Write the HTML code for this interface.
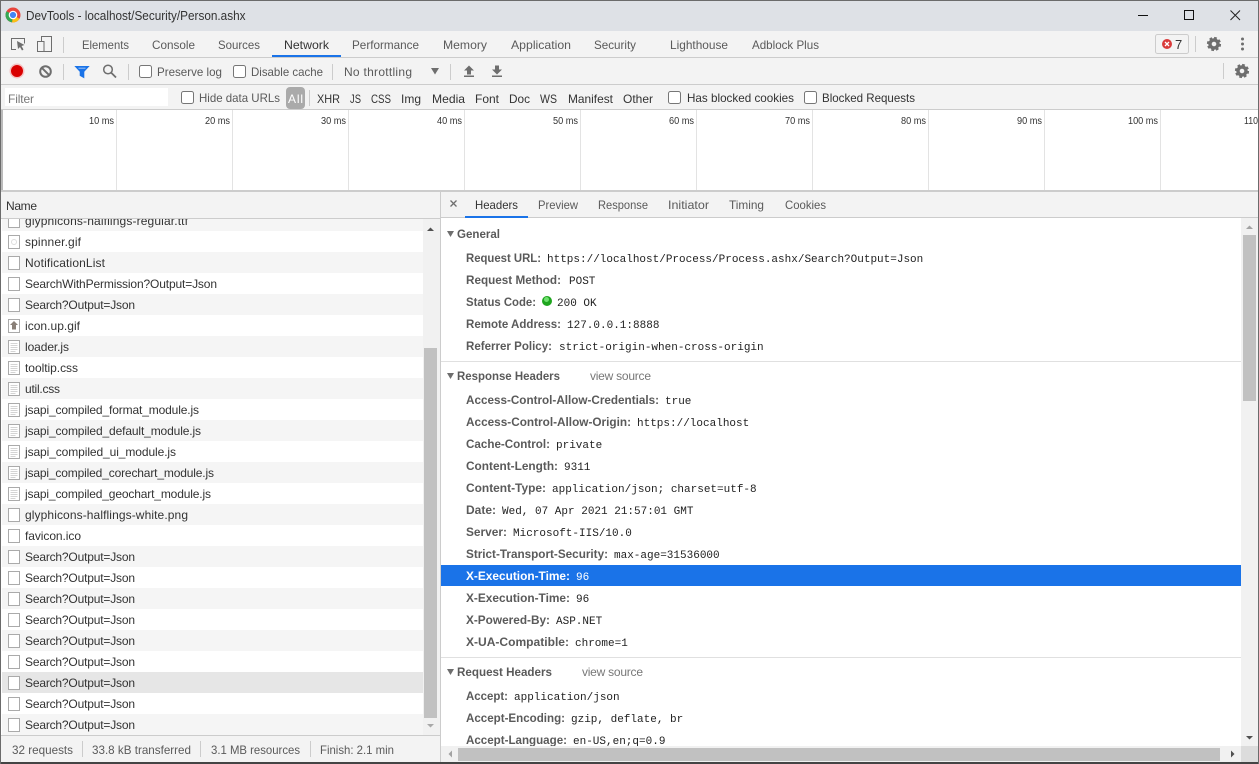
<!DOCTYPE html>
<html><head><meta charset="utf-8"><title>DevTools - localhost/Security/Person.ashx</title>
<style>
html,body{margin:0;padding:0;background:#333;width:1259px;height:764px;overflow:hidden}
svg{display:block}
text{font-family:"Liberation Sans",sans-serif;font-size:12px;fill:#5a5a5a;white-space:pre}
.d{fill:#333}
.b{font-weight:bold;fill:#5a5a5a}
.m{font-family:"Liberation Mono",monospace;font-size:11px;fill:#222}
.t{font-size:10px;fill:#333}
.w{fill:#fff}
</style></head><body>
<svg width="1259" height="764" viewBox="0 0 1259 764" xmlns="http://www.w3.org/2000/svg">
<defs>
<g id="f"><rect x="8.5" y="-6.500" width="11" height="13" fill="#fff" stroke="#aaa"/></g>
<g id="s"><rect x="8.5" y="-6.500" width="11" height="13" fill="#fff" stroke="#aaa"/><path d="M10.500-3.500h7M10.500-1.500h7M10.500 .5h7M10.500 2.500h7M10.500 4.500h5" stroke="#d4d4d4" fill="none"/></g>
<g id="gear"><circle r="4" fill="none" stroke="#6e6e6e" stroke-width="3.400"/><circle r="6" fill="none" stroke="#6e6e6e" stroke-width="2.200" stroke-dasharray="2.700 2"/></g>
<g id="cb"><rect x=".5" y=".5" width="12" height="12" rx="2" fill="#fff" stroke="#767676"/></g>
</defs>

<rect width="1259" height="764" fill="#444"/>
<rect x="1" y="1" width="1257" height="761" fill="#fff"/>
<rect width="1259" height="1" fill="#6b6b6b"/>
<rect x="0" width="1" height="764" fill="#6b6b6b"/>
<rect x="1258" width="1" height="764" fill="#6b6b6b"/>

<!-- title bar -->
<rect x="1" y="1" width="1257" height="30" fill="#dee1e6"/>
<circle cx="13" cy="15" r="7.500" fill="#e8453c"/>
<path d="M13 15L19.500 18.800A7.500 7.500 0 0 1 12 22.400Z" fill="#fbc116"/>
<path d="M13 15L12 22.400A7.500 7.500 0 0 1 6.500 11.200Z" fill="#34a853"/>
<circle cx="13" cy="15" r="3.700" fill="#4285f4" stroke="#fff" stroke-width="1.200"/>
<text x="26" y="20" class="d" textLength="219.500" lengthAdjust="spacingAndGlyphs" style="font-size:12.500px">DevTools - localhost/Security/Person.ashx</text>
<path d="M1138 15.500h10" stroke="#111" fill="none"/>
<rect x="1184.500" y="10.500" width="9" height="9" fill="none" stroke="#111"/>
<path d="M1230.500 10.500l9.500 9.500M1240 10.500l-9.500 9.500" stroke="#222" fill="none"/>

<!-- main tabs -->
<rect x="1" y="31" width="1257" height="26" fill="#f3f3f3"/>
<rect x="1" y="57" width="1257" height="1" fill="#ccc"/>
<path d="M16 49.500h-4.500v-11h13v5" fill="none" stroke="#6e6e6e"/>
<path d="M17 41l7.500 4-3 1 2 3.500-1.500 1-2-3.500-2 2z" fill="#6e6e6e"/>
<path d="M41.500 41v-4.500h10v15h-7" fill="none" stroke="#6e6e6e"/>
<rect x="37.500" y="41.500" width="6.500" height="10" fill="#f3f3f3" stroke="#6e6e6e"/>
<rect x="63" y="37" width="1" height="16" fill="#ccc"/>
<text x="82" y="49" textLength="47" lengthAdjust="spacingAndGlyphs">Elements</text>
<text x="152" y="49" textLength="43" lengthAdjust="spacingAndGlyphs">Console</text>
<text x="218" y="49" textLength="42" lengthAdjust="spacingAndGlyphs">Sources</text>
<text x="284" y="49" class="d" textLength="45" lengthAdjust="spacingAndGlyphs">Network</text>
<text x="352" y="49" textLength="67" lengthAdjust="spacingAndGlyphs">Performance</text>
<text x="443" y="49" textLength="44" lengthAdjust="spacingAndGlyphs">Memory</text>
<text x="511" y="49" textLength="60" lengthAdjust="spacingAndGlyphs">Application</text>
<text x="594" y="49" textLength="42" lengthAdjust="spacingAndGlyphs">Security</text>
<text x="670" y="49" textLength="58" lengthAdjust="spacingAndGlyphs">Lighthouse</text>
<text x="752" y="49" textLength="67" lengthAdjust="spacingAndGlyphs">Adblock Plus</text>
<rect x="272" y="55" width="69" height="2" fill="#1a73e8"/>
<rect x="1155.500" y="34.500" width="33" height="19" rx="2" fill="#f3f3f3" stroke="#ccc"/>
<circle cx="1167" cy="44" r="5" fill="#d93a3a"/>
<path d="M1165 42l4 4M1169 42l-4 4" stroke="#fff" stroke-width="1.300" fill="none"/>
<text x="1175" y="49" class="d" style="font-size:13px">7</text>
<rect x="1195" y="36" width="1" height="16" fill="#ccc"/>
<use href="#gear" x="1214" y="44"/>
<circle cx="1242.500" cy="39" r="1.500" fill="#6e6e6e"/><circle cx="1242.500" cy="44" r="1.500" fill="#6e6e6e"/><circle cx="1242.500" cy="49" r="1.500" fill="#6e6e6e"/>

<!-- toolbar -->
<rect x="1" y="58" width="1257" height="26" fill="#f3f3f3"/>
<rect x="1" y="84" width="1257" height="1" fill="#ccc"/>
<circle cx="17" cy="71" r="7.500" fill="#f4c2c2"/>
<circle cx="17" cy="71" r="6" fill="#d90000"/>
<circle cx="45.500" cy="71.500" r="5.300" fill="none" stroke="#6e6e6e" stroke-width="2"/>
<path d="M41.800 67.800l7.400 7.400" stroke="#6e6e6e" stroke-width="2" fill="none"/>
<rect x="63" y="64" width="1" height="16" fill="#ccc"/>
<path d="M75.500 66.500h13l-4.700 5v6l-3.600-2v-4z" fill="#1a73e8" stroke="#1a73e8"/>
<path d="M78.500 68.200h7" stroke="#9cc3f5" fill="none"/>
<circle cx="108" cy="69.500" r="4.300" fill="none" stroke="#6e6e6e" stroke-width="1.500"/>
<path d="M111 72.500l5 5" stroke="#6e6e6e" stroke-width="1.800" fill="none"/>
<rect x="128" y="64" width="1" height="16" fill="#ccc"/>
<use href="#cb" x="139" y="65"/>
<text x="157" y="76" textLength="65" lengthAdjust="spacingAndGlyphs">Preserve log</text>
<use href="#cb" x="233" y="65"/>
<text x="251" y="76" textLength="72" lengthAdjust="spacingAndGlyphs">Disable cache</text>
<rect x="332" y="64" width="1" height="16" fill="#ccc"/>
<text x="344" y="76" textLength="68">No throttling</text>
<path d="M431 68h8l-4 6.500z" fill="#6e6e6e"/>
<rect x="450" y="64" width="1" height="16" fill="#ccc"/>
<path d="M469 65.500l5 5h-3v4h-4v-4h-3z" fill="#6e6e6e"/><rect x="464" y="75.500" width="10" height="1.500" fill="#6e6e6e"/>
<path d="M495 65.500h4v4h3l-5 5-5-5h3z" fill="#6e6e6e"/><rect x="492" y="75.500" width="10" height="1.500" fill="#6e6e6e"/>
<rect x="1223" y="63" width="1" height="16" fill="#ccc"/>
<use href="#gear" x="1242" y="71"/>

<!-- filter bar -->
<rect x="1" y="85" width="1257" height="24" fill="#f3f3f3"/>
<rect x="1" y="109" width="1257" height="1" fill="#ccc"/>
<rect x="5" y="88" width="163" height="18" fill="#fff"/>
<text x="8" y="103" style="fill:#777" textLength="26">Filter</text>
<use href="#cb" x="181" y="91"/>
<text x="199" y="102" textLength="81" lengthAdjust="spacingAndGlyphs">Hide data URLs</text>
<rect x="286" y="87" width="19" height="22" rx="4" fill="#aaa"/>
<text x="288" y="103" class="w" textLength="15">All</text>
<rect x="309" y="90" width="1" height="16" fill="#ccc"/>
<text x="317" y="103" class="d" textLength="23" lengthAdjust="spacingAndGlyphs">XHR</text>
<text x="350" y="103" class="d" textLength="11" lengthAdjust="spacingAndGlyphs">JS</text>
<text x="371" y="103" class="d" textLength="20" lengthAdjust="spacingAndGlyphs">CSS</text>
<text x="401" y="103" class="d" textLength="20" lengthAdjust="spacingAndGlyphs">Img</text>
<text x="432" y="103" class="d" textLength="33" lengthAdjust="spacingAndGlyphs">Media</text>
<text x="475" y="103" class="d" textLength="24" lengthAdjust="spacingAndGlyphs">Font</text>
<text x="509" y="103" class="d" textLength="21" lengthAdjust="spacingAndGlyphs">Doc</text>
<text x="540" y="103" class="d" textLength="17" lengthAdjust="spacingAndGlyphs">WS</text>
<text x="568" y="103" class="d" textLength="45" lengthAdjust="spacingAndGlyphs">Manifest</text>
<text x="623" y="103" class="d" textLength="30" lengthAdjust="spacingAndGlyphs">Other</text>
<use href="#cb" x="668" y="91"/>
<text x="687" y="102" class="d" textLength="107" lengthAdjust="spacingAndGlyphs">Has blocked cookies</text>
<use href="#cb" x="804" y="91"/>
<text x="822" y="102" class="d" textLength="93" lengthAdjust="spacingAndGlyphs">Blocked Requests</text>

<!-- timeline -->
<rect x="1" y="110" width="1257" height="80" fill="#fff"/>
<rect x="1" y="110" width="2" height="80" fill="#bbb"/>
<path d="M116.500 110v80M232.500 110v80M348.500 110v80M464.500 110v80M580.500 110v80M696.500 110v80M812.500 110v80M928.500 110v80M1044.500 110v80M1160.500 110v80" stroke="#e3e3e3" fill="none"/>
<text x="89" y="124" class="t" textLength="25" lengthAdjust="spacingAndGlyphs">10 ms</text>
<text x="205" y="124" class="t" textLength="25" lengthAdjust="spacingAndGlyphs">20 ms</text>
<text x="321" y="124" class="t" textLength="25" lengthAdjust="spacingAndGlyphs">30 ms</text>
<text x="437" y="124" class="t" textLength="25" lengthAdjust="spacingAndGlyphs">40 ms</text>
<text x="553" y="124" class="t" textLength="25" lengthAdjust="spacingAndGlyphs">50 ms</text>
<text x="669" y="124" class="t" textLength="25" lengthAdjust="spacingAndGlyphs">60 ms</text>
<text x="785" y="124" class="t" textLength="25" lengthAdjust="spacingAndGlyphs">70 ms</text>
<text x="901" y="124" class="t" textLength="25" lengthAdjust="spacingAndGlyphs">80 ms</text>
<text x="1017" y="124" class="t" textLength="25" lengthAdjust="spacingAndGlyphs">90 ms</text>
<text x="1128" y="124" class="t" textLength="30" lengthAdjust="spacingAndGlyphs">100 ms</text>
<text x="1244" y="124" class="t" textLength="14" lengthAdjust="spacingAndGlyphs">110</text>
<rect x="1" y="190" width="1257" height="2" fill="#ccc"/>

<!-- left: name header -->
<rect x="1" y="192" width="439" height="26" fill="#f3f3f3"/>
<rect x="1" y="218" width="439" height="1" fill="#ccc"/>
<text x="6" y="210" class="d" textLength="31">Name</text>

<!-- rows -->
<rect x="2" y="219" width="421" height="516" fill="#fff"/>
<rect x="2" y="219" width="421" height="12" fill="#f5f5f5"/>
<rect x="2" y="252" width="421" height="21" fill="#f5f5f5"/>
<rect x="2" y="294" width="421" height="21" fill="#f5f5f5"/>
<rect x="2" y="336" width="421" height="21" fill="#f5f5f5"/>
<rect x="2" y="378" width="421" height="21" fill="#f5f5f5"/>
<rect x="2" y="420" width="421" height="21" fill="#f5f5f5"/>
<rect x="2" y="462" width="421" height="21" fill="#f5f5f5"/>
<rect x="2" y="504" width="421" height="21" fill="#f5f5f5"/>
<rect x="2" y="546" width="421" height="21" fill="#f5f5f5"/>
<rect x="2" y="588" width="421" height="21" fill="#f5f5f5"/>
<rect x="2" y="630" width="421" height="21" fill="#f5f5f5"/>
<rect x="2" y="672" width="421" height="21" fill="#e6e6e6"/>
<rect x="2" y="714" width="421" height="21" fill="#f5f5f5"/>

<svg x="0" y="219" width="423" height="516" viewBox="0 219 423 516" overflow="hidden">
<use href="#f" x="0" y="221"/><text x="25" y="225" class="d" textLength="163">glyphicons-halflings-regular.ttf</text>
<use href="#f" x="0" y="242"/><circle cx="14" cy="242" r="2.500" fill="none" stroke="#ddd"/><text x="25" y="246" class="d" textLength="56">spinner.gif</text>
<use href="#f" x="0" y="263"/><text x="25" y="267" class="d" textLength="80">NotificationList</text>
<use href="#f" x="0" y="284"/><text x="25" y="288" class="d" textLength="192">SearchWithPermission?Output=Json</text>
<use href="#f" x="0" y="305"/><text x="25" y="309" class="d" textLength="110">Search?Output=Json</text>
<use href="#f" x="0" y="326"/><path d="M14 321l4 4h-2v4.500h-4V325h-2z" fill="#8a8078"/><text x="25" y="330" class="d" textLength="55">icon.up.gif</text>
<use href="#s" x="0" y="347"/><text x="25" y="351" class="d" textLength="44">loader.js</text>
<use href="#s" x="0" y="368"/><text x="25" y="372" class="d" textLength="53">tooltip.css</text>
<use href="#s" x="0" y="389"/><text x="25" y="393" class="d" textLength="35">util.css</text>
<use href="#s" x="0" y="410"/><text x="25" y="414" class="d" textLength="174">jsapi_compiled_format_module.js</text>
<use href="#s" x="0" y="431"/><text x="25" y="435" class="d" textLength="176">jsapi_compiled_default_module.js</text>
<use href="#s" x="0" y="452"/><text x="25" y="456" class="d" textLength="151">jsapi_compiled_ui_module.js</text>
<use href="#s" x="0" y="473"/><text x="25" y="477" class="d" textLength="189">jsapi_compiled_corechart_module.js</text>
<use href="#s" x="0" y="494"/><text x="25" y="498" class="d" textLength="186">jsapi_compiled_geochart_module.js</text>
<use href="#f" x="0" y="515"/><text x="25" y="519" class="d" textLength="163">glyphicons-halflings-white.png</text>
<use href="#f" x="0" y="536"/><text x="25" y="540" class="d" textLength="56">favicon.ico</text>
<use href="#f" x="0" y="557"/><text x="25" y="561" class="d" textLength="110">Search?Output=Json</text>
<use href="#f" x="0" y="578"/><text x="25" y="582" class="d" textLength="110">Search?Output=Json</text>
<use href="#f" x="0" y="599"/><text x="25" y="603" class="d" textLength="110">Search?Output=Json</text>
<use href="#f" x="0" y="620"/><text x="25" y="624" class="d" textLength="110">Search?Output=Json</text>
<use href="#f" x="0" y="641"/><text x="25" y="645" class="d" textLength="110">Search?Output=Json</text>
<use href="#f" x="0" y="662"/><text x="25" y="666" class="d" textLength="110">Search?Output=Json</text>
<use href="#f" x="0" y="683"/><text x="25" y="687" class="d" textLength="110">Search?Output=Json</text>
<use href="#f" x="0" y="704"/><text x="25" y="708" class="d" textLength="110">Search?Output=Json</text>
<use href="#f" x="0" y="725"/><text x="25" y="729" class="d" textLength="110">Search?Output=Json</text>
</svg>

<!-- left scrollbar -->
<rect x="423" y="219" width="17" height="516" fill="#f1f1f1"/>
<path d="M427 231l3.500-3.500 3.500 3.500z" fill="#505050"/>
<rect x="424" y="348" width="13" height="370" fill="#c1c1c1"/>
<path d="M427 724l3.500 3.500 3.500-3.500z" fill="#a8a8a8"/>

<!-- status bar -->
<rect x="1" y="735" width="439" height="27" fill="#f3f3f3"/>
<rect x="1" y="735" width="439" height="1" fill="#ccc"/>
<text x="12" y="754" textLength="61" lengthAdjust="spacingAndGlyphs">32 requests</text>
<rect x="82" y="741" width="1" height="16" fill="#ccc"/>
<text x="92" y="754" textLength="99" lengthAdjust="spacingAndGlyphs">33.8 kB transferred</text>
<rect x="200" y="741" width="1" height="16" fill="#ccc"/>
<text x="211" y="754" textLength="89" lengthAdjust="spacingAndGlyphs">3.1 MB resources</text>
<rect x="310" y="741" width="1" height="16" fill="#ccc"/>
<text x="320" y="754" textLength="74" lengthAdjust="spacingAndGlyphs">Finish: 2.1 min</text>

<!-- splitter -->
<rect x="440" y="192" width="1" height="570" fill="#ccc"/>

<!-- details tabs -->
<rect x="441" y="192" width="817" height="25" fill="#f3f3f3"/>
<rect x="441" y="217" width="817" height="1" fill="#ccc"/>
<path d="M450.500 200.500l6 6M456.500 200.500l-6 6" stroke="#6e6e6e" stroke-width="1.300" fill="none"/>
<text x="475" y="209" class="d" textLength="43" lengthAdjust="spacingAndGlyphs">Headers</text>
<text x="538" y="209" textLength="40" lengthAdjust="spacingAndGlyphs">Preview</text>
<text x="598" y="209" textLength="50" lengthAdjust="spacingAndGlyphs">Response</text>
<text x="668" y="209" textLength="41" lengthAdjust="spacingAndGlyphs">Initiator</text>
<text x="729" y="209" textLength="35" lengthAdjust="spacingAndGlyphs">Timing</text>
<text x="785" y="209" textLength="41" lengthAdjust="spacingAndGlyphs">Cookies</text>
<rect x="465" y="216" width="63" height="2" fill="#1a73e8"/>

<!-- details body -->
<rect x="441" y="218" width="800" height="528" fill="#fff"/>
<path d="M447 231h7l-3.500 6z" fill="#6e6e6e"/>
<text x="457" y="238" class="b" textLength="43" lengthAdjust="spacingAndGlyphs">General</text>
<text x="466" y="262" class="b" textLength="75" lengthAdjust="spacingAndGlyphs">Request URL:</text><text x="547" y="262" class="m">https://localhost/Process/Process.ashx/Search?Output=Json</text>
<text x="466" y="284" class="b" textLength="95" lengthAdjust="spacingAndGlyphs">Request Method:</text><text x="569" y="284" class="m">POST</text>
<text x="466" y="306" class="b" textLength="70" lengthAdjust="spacingAndGlyphs">Status Code:</text><circle cx="547" cy="301" r="5" fill="#1fa51f"/><circle cx="546.500" cy="299.500" r="2.500" fill="#6fe06f"/><text x="557" y="306" class="m">200 OK</text>
<text x="466" y="328" class="b" textLength="95" lengthAdjust="spacingAndGlyphs">Remote Address:</text><text x="567" y="328" class="m">127.0.0.1:8888</text>
<text x="466" y="350" class="b" textLength="86" lengthAdjust="spacingAndGlyphs">Referrer Policy:</text><text x="559" y="350" class="m">strict-origin-when-cross-origin</text>
<rect x="441" y="361" width="800" height="1" fill="#e0e0e0"/>

<path d="M447 373h7l-3.500 6z" fill="#6e6e6e"/>
<text x="457" y="380" class="b" textLength="103" lengthAdjust="spacingAndGlyphs">Response Headers</text>
<text x="590" y="380" textLength="61" style="fill:#777">view source</text>
<text x="466" y="404" class="b" textLength="193" lengthAdjust="spacingAndGlyphs">Access-Control-Allow-Credentials:</text><text x="665" y="404" class="m">true</text>
<text x="466" y="426" class="b" textLength="165" lengthAdjust="spacingAndGlyphs">Access-Control-Allow-Origin:</text><text x="637" y="426" class="m">https://localhost</text>
<text x="466" y="448" class="b" textLength="84" lengthAdjust="spacingAndGlyphs">Cache-Control:</text><text x="556" y="448" class="m">private</text>
<text x="466" y="470" class="b" textLength="92" lengthAdjust="spacingAndGlyphs">Content-Length:</text><text x="564" y="470" class="m">9311</text>
<text x="466" y="492" class="b" textLength="80" lengthAdjust="spacingAndGlyphs">Content-Type:</text><text x="552" y="492" class="m">application/json; charset=utf-8</text>
<text x="466" y="514" class="b" textLength="30" lengthAdjust="spacingAndGlyphs">Date:</text><text x="502" y="514" class="m">Wed, 07 Apr 2021 21:57:01 GMT</text>
<text x="466" y="536" class="b" textLength="41" lengthAdjust="spacingAndGlyphs">Server:</text><text x="513" y="536" class="m">Microsoft-IIS/10.0</text>
<text x="466" y="558" class="b" textLength="142" lengthAdjust="spacingAndGlyphs">Strict-Transport-Security:</text><text x="614" y="558" class="m">max-age=31536000</text>
<rect x="441" y="565" width="800" height="21" fill="#1a73e8"/>
<text x="466" y="580" class="b" textLength="104" lengthAdjust="spacingAndGlyphs" style="fill:#fff">X-Execution-Time:</text><text x="576" y="580" class="m" style="fill:#fff">96</text>
<text x="466" y="602" class="b" textLength="104" lengthAdjust="spacingAndGlyphs">X-Execution-Time:</text><text x="576" y="602" class="m">96</text>
<text x="466" y="624" class="b" textLength="84" lengthAdjust="spacingAndGlyphs">X-Powered-By:</text><text x="556" y="624" class="m">ASP.NET</text>
<text x="466" y="646" class="b" textLength="103" lengthAdjust="spacingAndGlyphs">X-UA-Compatible:</text><text x="575" y="646" class="m">chrome=1</text>
<rect x="441" y="657" width="800" height="1" fill="#e0e0e0"/>

<path d="M447 669h7l-3.500 6z" fill="#6e6e6e"/>
<text x="457" y="676" class="b" textLength="95" lengthAdjust="spacingAndGlyphs">Request Headers</text>
<text x="582" y="676" textLength="61" style="fill:#777">view source</text>
<text x="466" y="700" class="b" textLength="42" lengthAdjust="spacingAndGlyphs">Accept:</text><text x="514" y="700" class="m">application/json</text>
<text x="466" y="722" class="b" textLength="99" lengthAdjust="spacingAndGlyphs">Accept-Encoding:</text><text x="571" y="722" class="m">gzip, deflate, br</text>
<text x="466" y="744" class="b" textLength="101" lengthAdjust="spacingAndGlyphs">Accept-Language:</text><text x="573" y="744" class="m">en-US,en;q=0.9</text>

<!-- right vertical scrollbar -->
<rect x="1241" y="218" width="17" height="528" fill="#f1f1f1"/>
<path d="M1246 229l3.500-3.500 3.500 3.500z" fill="#a3a3a3"/>
<rect x="1243" y="235" width="13" height="166" fill="#c1c1c1"/>
<path d="M1246 736l3.500 3.500 3.500-3.500z" fill="#505050"/>

<!-- horizontal scrollbar -->
<rect x="441" y="746" width="800" height="16" fill="#f1f1f1"/>
<path d="M452 750.500l-3.500 3.500 3.500 3.500z" fill="#a3a3a3"/>
<rect x="458" y="748" width="762" height="13" fill="#c1c1c1"/>
<path d="M1231 750.500l3.500 3.500-3.500 3.500z" fill="#505050"/>
<rect x="1241" y="746" width="17" height="16" fill="#dcdcdc"/>
</svg>
</body></html>
